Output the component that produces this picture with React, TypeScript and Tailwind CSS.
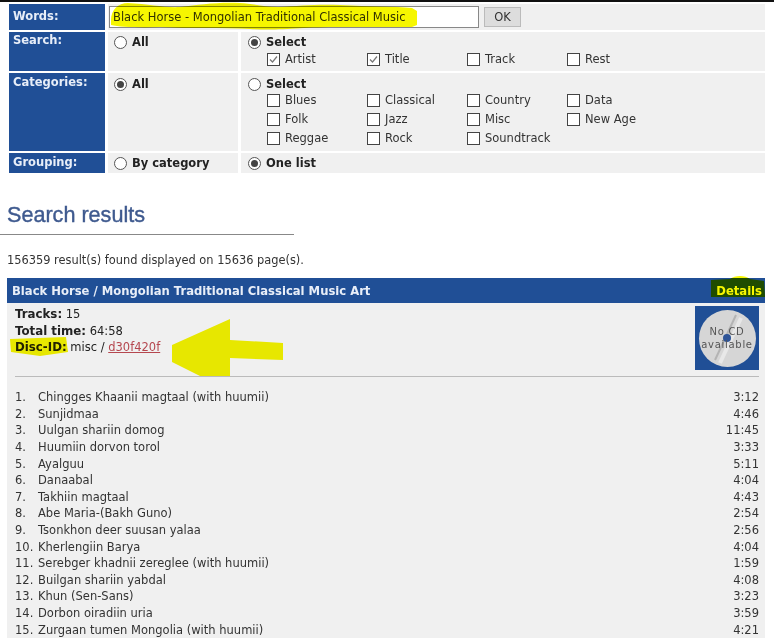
import * as React from "react";

const font = { fontFamily: '"DejaVu Sans", Verdana, sans-serif' };

const tracks = [
  ["Chingges Khaanii magtaal (with huumii)", "3:12"],
  ["Sunjidmaa", "4:46"],
  ["Uulgan shariin domog", "11:45"],
  ["Huumiin dorvon torol", "3:33"],
  ["Ayalguu", "5:11"],
  ["Danaabal", "4:04"],
  ["Takhiin magtaal", "4:43"],
  ["Abe Maria-(Bakh Guno)", "2:54"],
  ["Tsonkhon deer suusan yalaa", "2:56"],
  ["Kherlengiin Barya", "4:04"],
  ["Serebger khadnii zereglee (with huumii)", "1:59"],
  ["Builgan shariin yabdal", "4:08"],
  ["Khun (Sen-Sans)", "3:23"],
  ["Dorbon oiradiin uria", "3:59"],
  ["Zurgaan tumen Mongolia (with huumii)", "4:21"],
];

function Label({ children, className = "" }: { children: React.ReactNode; className?: string }) {
  return <div className={`bg-[#204f96] pl-1 text-[11.5px] font-bold leading-[14px] text-[#e8eef8] ${className}`}>{children}</div>;
}

function Radio({ checked, label }: { checked?: boolean; label: string }) {
  return (
    <div className="flex items-center gap-[5px] text-[11.5px] font-bold leading-[14px] text-[#222]">
      <span className="flex h-[13px] w-[13px] items-center justify-center rounded-full border border-[#555] bg-white">
        {checked && <span className="h-[7px] w-[7px] rounded-full bg-[#444]" />}
      </span>
      {label}
    </div>
  );
}

function Check({ checked, label }: { checked?: boolean; label: string }) {
  return (
    <div className="flex w-[100px] items-center gap-[5px] text-[11.5px] leading-[14px] text-[#333]">
      <span className="flex h-[13px] w-[13px] items-center justify-center border border-[#444] bg-white">
        {checked && (
          <svg width="11" height="11" viewBox="0 0 11 11" fill="none" stroke="#777" strokeWidth="1.2">
            <path d="M2 5.5 L4.5 8 L9 2.5" />
          </svg>
        )}
      </span>
      {label}
    </div>
  );
}

// marker pen strokes someone drew on the screenshot
function Highlights() {
  return (
    <svg className="pointer-events-none absolute left-0 top-0 mix-blend-multiply" width="774" height="638" fill="#f6f600">
      <path d="M111 20 C111 10 118 3 128 3 C150 4 165 8 180 7 C200 5 215 2 240 3 C255 4 265 7 278 7 C300 6 315 4 340 5 C370 7 395 6 412 8 L417 11 L417 25 L412 27 L340 27 C300 27 280 31 250 29 C220 27 190 29 160 27 C140 28 120 27 111 25 Z" />
      <path d="M10 339 L66 337 L68 352 L40 356 L11 352 Z" />
      <path d="M172 345 L230 319 L230 340 L283 343 L283 360 L230 358 L230 376 L200 376 L172 362 Z" />
      <path d="M711 280 L730 279 C735 275 745 275 750 279 L764 281 L765 297 L711 297 Z" />
    </svg>
  );
}

export default function App() {
  return (
    <div className="relative h-[638px] w-[774px] overflow-hidden bg-white text-[11.5px] leading-[14px]" style={font}>
      <div className="h-[2px] bg-[#111]" />
      <div className="ml-[9px] mt-[2px] grid w-[756px] grid-cols-[96px_130px_524px] gap-x-[3px] gap-y-[2px]">
        <Label className="pt-[5px]">Words:</Label>
        <div className="col-span-2 flex h-[26px] items-center gap-[5px] bg-[#f0f0f0] pl-[1px]">
          <div className="flex h-[22px] w-[370px] items-center border border-[#888] bg-white pl-[3px] text-[#333]">
            Black Horse - Mongolian Traditional Classical Music
          </div>
          <div className="flex h-[20px] w-[37px] items-center justify-center border border-[#bbb] bg-[#ddd] text-[#333]">OK</div>
        </div>

        <Label className="pt-[1px]">Search:</Label>
        <div className="h-[39px] bg-[#f0f0f0] pl-[6px] pt-[3px]">
          <Radio label="All" />
        </div>
        <div className="bg-[#f0f0f0] pl-[7px] pt-[3px]">
          <Radio checked label="Select" />
          <div className="ml-[19px] mt-[3px] flex">
            <Check checked label="Artist" />
            <Check checked label="Title" />
            <Check label="Track" />
            <Check label="Rest" />
          </div>
        </div>

        <Label className="pt-[2px]">Categories:</Label>
        <div className="h-[78px] bg-[#f0f0f0] pl-[6px] pt-[4px]">
          <Radio checked label="All" />
        </div>
        <div className="bg-[#f0f0f0] pl-[7px] pt-[4px]">
          <Radio label="Select" />
          <div className="ml-[19px] mt-[2px] grid grid-cols-[100px_100px_100px_100px] gap-y-[5px]">
            {["Blues", "Classical", "Country", "Data", "Folk", "Jazz", "Misc", "New Age", "Reggae", "Rock", "Soundtrack"].map((c) => (
              <Check key={c} label={c} />
            ))}
          </div>
        </div>

        <Label className="pt-[2px]">Grouping:</Label>
        <div className="h-[20px] bg-[#f0f0f0] pl-[6px] pt-[3px]">
          <Radio label="By category" />
        </div>
        <div className="bg-[#f0f0f0] pl-[7px] pt-[3px]">
          <Radio checked label="One list" />
        </div>
      </div>

      <h2
        className="ml-[7px] mt-[29px] text-[21.6px] leading-[26px] text-[#3f5a8f] [-webkit-text-stroke:0.4px_#3f5a8f]"
        style={{ fontFamily: '"Liberation Sans", Arial, sans-serif' }}
      >
        Search results
      </h2>
      <div className="mt-[6px] h-px w-[294px] bg-[#888]" />
      <p className="ml-[7px] mt-[18px] text-[11.4px] text-[#333]">156359 result(s) found displayed on 15636 page(s).</p>

      <div className="ml-[7px] mt-[11px] w-[758px] bg-[#f0f0f0]">
        <div className="flex h-[25px] items-center justify-between bg-[#204f96] pl-[5px] pr-[3px] text-[11.6px] font-bold text-[#e8eef8]">
          <span>Black Horse / Mongolian Traditional Classical Music Art</span>
          <span className="text-white">Details</span>
        </div>
        <div className="pl-2 pr-[6px] pt-[3px]">
          <div className="flex justify-between border-b border-[#bbb] pb-[6px]">
            <div className="leading-[16.5px] text-[#222]">
              <div><b className="text-[11.8px]">Tracks:</b> 15</div>
              <div><b className="text-[11.8px]">Total time:</b> 64:58</div>
              <div><b className="text-[11.8px]">Disc-ID:</b> misc / <span className="text-[#b5474f] underline">d30f420f</span></div>
            </div>
            <div className="flex h-[64px] w-[64px] items-center justify-center bg-[#204f96]">
              <div className="relative flex h-[57px] w-[57px] items-center justify-center rounded-full bg-[#d6d6d6] text-center text-[10px] leading-[13px] text-[#555]">
                <svg className="absolute left-0 top-0" width="57" height="57" fill="none">
                  <path d="M16 50 L37 5" stroke="#b4b4b4" strokeWidth="2" />
                  <path d="M21 53 L42 8" stroke="#e8e8e8" strokeWidth="4" />
                </svg>
                <span className="absolute h-[8px] w-[8px] rounded-full bg-[#2f5598]" />
                <span className="relative tracking-[0.7px]">No CD<br />available</span>
              </div>
            </div>
          </div>
          <div className="pt-[12px] text-[#333]">
            {tracks.map(([name, time], i) => (
              <div key={name} className="flex h-[16.6px] items-center">
                <span className="w-[23px]">{i + 1}.</span>
                <span className="flex-1">{name}</span>
                <span>{time}</span>
              </div>
            ))}
          </div>
        </div>
      </div>
      <Highlights />
    </div>
  );
}
